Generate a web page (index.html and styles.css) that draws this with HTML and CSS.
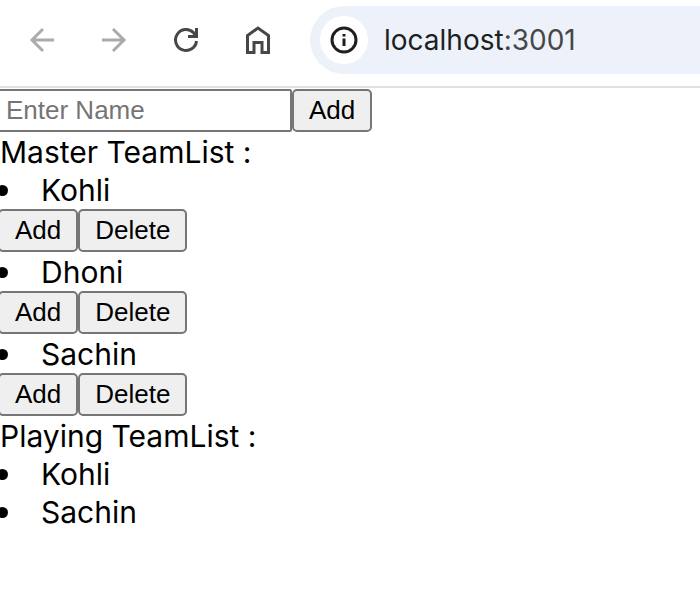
FILE: index.html
```html
<!DOCTYPE html>
<html lang="en">
<head>
<meta charset="utf-8">
<title>Team List</title>
<link rel="stylesheet" href="styles.css">
</head>
<body>
<header class="toolbar">
  <nav class="nav" aria-label="Browser">
    <button class="icon-button muted" type="button" aria-label="Back">
      <svg viewBox="0 0 28 28"><path d="M26 14H4M15 3L4 14l11 11"/></svg>
    </button>
    <button class="icon-button muted" type="button" aria-label="Forward">
      <svg viewBox="0 0 28 28"><path d="M2 14h22M13 3l11 11-11 11"/></svg>
    </button>
    <button class="icon-button" type="button" aria-label="Reload">
      <svg viewBox="0 0 28 28"><path d="M24.500 15A10.500 10.500 0 1 1 21.500 6.600L24 9"/><path class="solid" d="M26 2v10H16V9h4.500L23 6.500V2z"/></svg>
    </button>
    <button class="icon-button" type="button" aria-label="Home">
      <svg viewBox="0 0 28 28"><path d="M3.500 26.500V9.500L14 2l10.500 7.500v17H18V16.500h-8v10z"/></svg>
    </button>
  </nav>
  <div class="address">
    <button class="site-info" type="button" aria-label="Site information">
      <svg viewBox="0 0 28 28"><circle cx="14" cy="14" r="12"/><path d="M14 12.500v7.500M14 8v2.500"/></svg>
    </button>
    <span class="url">localhost<span class="port">:3001</span></span>
  </div>
</header>
<main class="page">
  <form class="row">
    <input class="name" type="text" placeholder="Enter Name" aria-label="Enter Name">
    <button class="action" type="button">Add</button>
  </form>
  <h1 class="heading">Master TeamList :</h1>
  <ul class="list">
    <li><span class="player">Kohli</span>
      <div class="row"><button class="action" type="button">Add</button><button class="action" type="button">Delete</button></div></li>
    <li><span class="player">Dhoni</span>
      <div class="row"><button class="action" type="button">Add</button><button class="action" type="button">Delete</button></div></li>
    <li><span class="player">Sachin</span>
      <div class="row"><button class="action" type="button">Add</button><button class="action" type="button">Delete</button></div></li>
  </ul>
  <h2 class="heading">Playing TeamList :</h2>
  <ul class="list">
    <li><span class="player">Kohli</span></li>
    <li><span class="player">Sachin</span></li>
  </ul>
</main>
</body>
</html>
```
FILE: styles.css
```css
* { box-sizing: border-box; }

body {
  margin: 0;
  overflow-x: hidden;
  background: #fff;
  color: #000;
  font-family: Inter, "Liberation Sans", sans-serif;
  font-size: 30px;
  line-height: 38px;
}

.toolbar {
  display: flex;
  align-items: center;
  gap: 38px;
  padding: 6px 0 12px 28px;
  border-bottom: 2px solid #e0e0e0;
}

.nav { display: flex; gap: 44px; }

.icon-button,
.site-info {
  display: flex;
  align-items: center;
  justify-content: center;
  flex: none;
  padding: 0;
  border: 0;
  background: none;
  color: #474747;
}

.muted { color: #ababab; }

svg {
  width: 28px;
  height: 28px;
  fill: none;
  stroke: currentColor;
  stroke-width: 3;
}

.solid {
  fill: currentColor;
  stroke: none;
}

.address {
  display: flex;
  flex: 1;
  align-items: center;
  gap: 16px;
  height: 68px;
  padding-left: 10px;
  border-radius: 34px 0 0 34px;
  background: #edf2fa;
}

.site-info {
  width: 48px;
  height: 48px;
  border-radius: 50%;
  background: #fff;
  color: #1f1f1f;
}

.url { color: #1f1f1f; font-size: 28px; }
.port { color: #474747; }

.page { padding-top: 1px; }

.row {
  display: flex;
  align-items: flex-start;
  height: 44px;
  margin-left: -2px;
}

.name,
.action {
  height: 43px;
  border: 2px solid #767676;
  font-family: "Liberation Sans", Arial, sans-serif;
  font-size: 26px;
  line-height: 30px;
}

.name {
  width: 294px;
  padding: 0 6px;
  border-radius: 2px;
  background: #fff;
}

.name::placeholder { color: #757575; opacity: 1; }

.action {
  padding: 0 15px 2px;
  border-radius: 5px;
  background: #efefef;
  color: #000;
}

.heading {
  margin: 0;
  font-size: inherit;
  font-weight: 400;
}

.list {
  margin: 0;
  padding: 0;
  list-style: none;
}

.player {
  display: flex;
  align-items: center;
  gap: 33px;
}

.player::before {
  content: "";
  width: 11px;
  height: 11px;
  margin-left: -3px;
  border-radius: 50%;
  background: #000;
}
```
